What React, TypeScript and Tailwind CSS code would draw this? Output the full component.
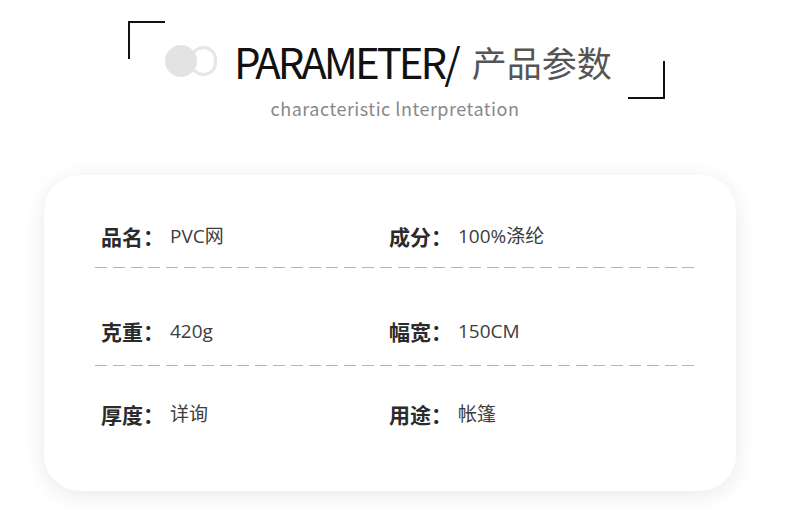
const cjk = 'font-["Noto_Sans_CJK_SC",sans-serif]'
const valFont = 'font-["Open_Sans","Noto_Sans_CJK_SC",sans-serif]'

const ROWS: { label: string; value: string }[][] = [
  [
    { label: '品名', value: 'PVC网' },
    { label: '成分', value: '100%涤纶' },
  ],
  [
    { label: '克重', value: '420g' },
    { label: '幅宽', value: '150CM' },
  ],
  [
    { label: '厚度', value: '详询' },
    { label: '用途', value: '帐篷' },
  ],
]

function Cell({ label, value }: { label: string; value: string }) {
  return (
    <div className="flex items-center">
      <span className={`${cjk} w-[69px] text-[21px] font-bold text-[#2b2b2b] leading-none`}>
        {label}：
      </span>
      <span className={`${valFont} text-[19px] text-[#3c3c3c] leading-none`}>{value}</span>
    </div>
  )
}

function Row({ cells, className }: { cells: { label: string; value: string }[]; className: string }) {
  return (
    <div className={`grid grid-cols-[288px_1fr] items-center h-[50px] pl-[6px] ${className}`}>
      {cells.map((c) => (
        <Cell key={c.label} label={c.label} value={c.value} />
      ))}
    </div>
  )
}

const dashCls =
  'h-px w-[600px] bg-[repeating-linear-gradient(90deg,#b4b4b4_0_12px,transparent_12px_17.8px)]'

export default function App() {
  return (
    <div className="w-[790px] h-[527px] bg-white overflow-hidden">
      {/* header */}
      <div className="relative ml-[128px] mt-[21px] w-[537px] h-[78px] flex items-center pl-[37px] pt-[2px]">
        <div className="absolute top-0 left-0 w-[37px] h-[38px] border-t-2 border-l-2 border-[#111]" />
        <div className="absolute bottom-0 right-0 w-[37px] h-[38px] border-b-2 border-r-2 border-[#111]" />

        <div className="flex items-center">
          <div className="relative z-10 w-[32px] h-[32px] rounded-full bg-[#e3e3e3]" />
          <div className="-ml-[7px] w-[27px] h-[30px] rounded-full border-[3px] border-[#e6e6e6]" />
        </div>
        <span className={`${cjk} ml-[17px] text-[42px] tracking-[-3px] text-[#111] leading-none`}>
          PARAMETER/
        </span>
        <span className={`${cjk} ml-[14px] text-[35px] text-[#555] leading-none`}>产品参数</span>
      </div>
      <div className={`${cjk} text-center text-[18px] text-[#888] leading-none tracking-[0.5px]`}>
        characteristic lnterpretation
      </div>

      {/* card */}
      <div className="ml-[44px] mt-[58px] w-[692px] h-[316px] rounded-[36px] bg-white shadow-[0_4px_22px_rgba(0,0,0,0.09)] pt-[36px] pl-[51px]">
        <Row cells={ROWS[0]} className="" />
        <div className={`${dashCls} mt-[6px]`} />
        <Row cells={ROWS[1]} className="mt-[38px]" />
        <div className={`${dashCls} mt-[9px]`} />
        <Row cells={ROWS[2]} className="mt-[23px]" />
      </div>
    </div>
  )
}
